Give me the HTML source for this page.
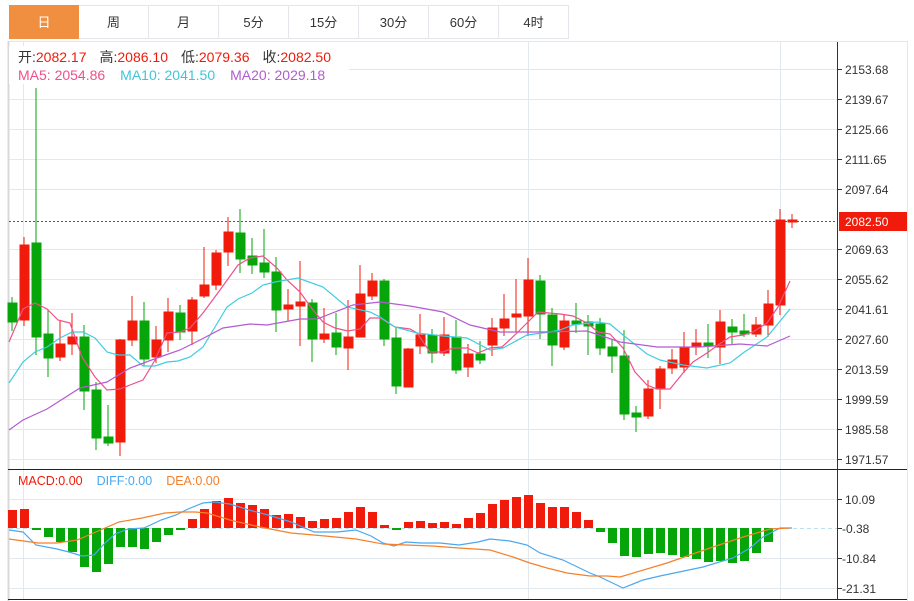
<!DOCTYPE html>
<html><head><meta charset="utf-8"><style>
body{margin:0;background:#fff;width:914px;height:601px;overflow:hidden;font-family:"Liberation Sans","Noto Sans CJK SC",sans-serif;}
.tabs{position:absolute;left:9px;top:5px;height:34px;display:flex;}
.tab{width:70px;height:34px;border:1px solid #e3e6ea;border-left:none;box-sizing:border-box;text-align:center;line-height:34px;font-size:13px;color:#333;}
.tab:first-child{border-left:1px solid #e3e6ea}
.tab.on{background:#f18f40;color:#fff;border-color:#f18f40}
svg{position:absolute;left:0;top:0}
</style></head><body>
<div class="tabs"><div class="tab on">日</div><div class="tab">周</div><div class="tab">月</div><div class="tab">5分</div><div class="tab">15分</div><div class="tab">30分</div><div class="tab">60分</div><div class="tab">4时</div></div>
<svg width="914" height="601" viewBox="0 0 914 601" font-family="Liberation Sans, Noto Sans CJK SC, sans-serif">
<g stroke="#e3e8ee" stroke-width="1">
<line x1="8" y1="41.5" x2="907" y2="41.5"/>
<line x1="8.5" y1="41" x2="8.5" y2="601" stroke="#d8d8d8" stroke-width="2"/>
<line x1="907.5" y1="41" x2="907.5" y2="601"/>
<line x1="23.5" y1="42" x2="23.5" y2="600"/>
<line x1="528.5" y1="42" x2="528.5" y2="600"/>
<line x1="780.5" y1="42" x2="780.5" y2="600"/>
<line x1="9" y1="69.5" x2="837" y2="69.5"/><line x1="9" y1="99.5" x2="837" y2="99.5"/><line x1="9" y1="129.5" x2="837" y2="129.5"/><line x1="9" y1="159.5" x2="837" y2="159.5"/><line x1="9" y1="189.5" x2="837" y2="189.5"/><line x1="9" y1="249.5" x2="837" y2="249.5"/><line x1="9" y1="279.5" x2="837" y2="279.5"/><line x1="9" y1="309.5" x2="837" y2="309.5"/><line x1="9" y1="339.5" x2="837" y2="339.5"/><line x1="9" y1="369.5" x2="837" y2="369.5"/><line x1="9" y1="399.5" x2="837" y2="399.5"/><line x1="9" y1="429.5" x2="837" y2="429.5"/><line x1="9" y1="459.5" x2="837" y2="459.5"/>
<line x1="9" y1="499.5" x2="837" y2="499.5"/><line x1="9" y1="558.5" x2="837" y2="558.5"/><line x1="9" y1="588.5" x2="837" y2="588.5"/>
</g>
<rect x="9" y="46" width="340" height="38" fill="#fff"/>
<line x1="9" y1="528.5" x2="837" y2="528.5" stroke="#bde0f0" stroke-dasharray="4,3"/>
<line x1="9" y1="221.5" x2="837" y2="221.5" stroke="#f01b0a" stroke-dasharray="2,2"/>
<g id="c">
<g stroke="#06a50a" fill="#06a50a">
<line x1="12" y1="297" x2="12" y2="331"/><rect x="8" y="303" width="9" height="19"/>
<line x1="36" y1="88" x2="36" y2="355"/><rect x="32" y="243" width="9" height="94"/>
<line x1="48" y1="310" x2="48" y2="377"/><rect x="44" y="334" width="9" height="24"/>
<line x1="84" y1="325" x2="84" y2="410"/><rect x="80" y="337" width="9" height="54"/>
<line x1="96" y1="382" x2="96" y2="450"/><rect x="92" y="390" width="9" height="48"/>
<line x1="108" y1="405" x2="108" y2="446"/><rect x="104" y="437" width="9" height="6"/>
<line x1="144" y1="302" x2="144" y2="366"/><rect x="140" y="321" width="9" height="38"/>
<line x1="180" y1="305" x2="180" y2="340"/><rect x="176" y="313" width="9" height="19"/>
<line x1="240" y1="209" x2="240" y2="273"/><rect x="236" y="233" width="9" height="26"/>
<line x1="252" y1="238" x2="252" y2="274"/><rect x="248" y="256" width="9" height="9"/>
<line x1="264" y1="229" x2="264" y2="278"/><rect x="260" y="263" width="9" height="9"/>
<line x1="276" y1="257" x2="276" y2="332"/><rect x="272" y="272" width="9" height="38"/>
<line x1="312" y1="299" x2="312" y2="362"/><rect x="308" y="303" width="9" height="36"/>
<line x1="336" y1="313" x2="336" y2="355"/><rect x="332" y="333" width="9" height="14"/>
<line x1="384" y1="279" x2="384" y2="346"/><rect x="380" y="281" width="9" height="58"/>
<line x1="396" y1="327" x2="396" y2="394"/><rect x="392" y="338" width="9" height="48"/>
<line x1="432" y1="329" x2="432" y2="363"/><rect x="428" y="335" width="9" height="18"/>
<line x1="456" y1="320" x2="456" y2="374"/><rect x="452" y="337" width="9" height="33"/>
<line x1="480" y1="341" x2="480" y2="364"/><rect x="476" y="354" width="9" height="6"/>
<line x1="540" y1="275" x2="540" y2="339"/><rect x="536" y="281" width="9" height="33"/>
<line x1="552" y1="308" x2="552" y2="366"/><rect x="548" y="315" width="9" height="30"/>
<line x1="576" y1="303" x2="576" y2="333"/><rect x="572" y="321" width="9" height="3"/>
<line x1="588" y1="315" x2="588" y2="355"/><rect x="584" y="322" width="9" height="4"/>
<line x1="600" y1="318" x2="600" y2="355"/><rect x="596" y="324" width="9" height="24"/>
<line x1="612" y1="340" x2="612" y2="373"/><rect x="608" y="347" width="9" height="9"/>
<line x1="624" y1="330" x2="624" y2="420"/><rect x="620" y="356" width="9" height="58"/>
<line x1="636" y1="406" x2="636" y2="432"/><rect x="632" y="413" width="9" height="4"/>
<line x1="708" y1="324" x2="708" y2="358"/><rect x="704" y="343" width="9" height="3"/>
<line x1="732" y1="319" x2="732" y2="344"/><rect x="728" y="327" width="9" height="5"/>
<line x1="744" y1="314" x2="744" y2="337"/><rect x="740" y="331" width="9" height="3"/>
</g>
<g stroke="#f01b0a" fill="#f01b0a">
<line x1="24" y1="237" x2="24" y2="326"/><rect x="20" y="245" width="9" height="75"/>
<line x1="60" y1="321" x2="60" y2="361"/><rect x="56" y="344" width="9" height="13"/>
<line x1="72" y1="313" x2="72" y2="355"/><rect x="68" y="337" width="9" height="7"/>
<line x1="120" y1="339" x2="120" y2="456"/><rect x="116" y="340" width="9" height="102"/>
<line x1="132" y1="296" x2="132" y2="346"/><rect x="128" y="321" width="9" height="19"/>
<line x1="156" y1="326" x2="156" y2="363"/><rect x="152" y="340" width="9" height="17"/>
<line x1="168" y1="298" x2="168" y2="352"/><rect x="164" y="312" width="9" height="28"/>
<line x1="192" y1="297" x2="192" y2="345"/><rect x="188" y="300" width="9" height="31"/>
<line x1="204" y1="247" x2="204" y2="298"/><rect x="200" y="285" width="9" height="11"/>
<line x1="216" y1="250" x2="216" y2="290"/><rect x="212" y="253" width="9" height="32"/>
<line x1="228" y1="217" x2="228" y2="266"/><rect x="224" y="232" width="9" height="20"/>
<line x1="288" y1="289" x2="288" y2="321"/><rect x="284" y="305" width="9" height="4"/>
<line x1="300" y1="261" x2="300" y2="346"/><rect x="296" y="302" width="9" height="4"/>
<line x1="324" y1="308" x2="324" y2="343"/><rect x="320" y="334" width="9" height="5"/>
<line x1="348" y1="300" x2="348" y2="370"/><rect x="344" y="337" width="9" height="11"/>
<line x1="360" y1="265" x2="360" y2="337"/><rect x="356" y="294" width="9" height="43"/>
<line x1="372" y1="273" x2="372" y2="300"/><rect x="368" y="281" width="9" height="15"/>
<line x1="408" y1="348" x2="408" y2="387"/><rect x="404" y="349" width="9" height="38"/>
<line x1="420" y1="314" x2="420" y2="354"/><rect x="416" y="335" width="9" height="11"/>
<line x1="444" y1="317" x2="444" y2="356"/><rect x="440" y="335" width="9" height="18"/>
<line x1="468" y1="344" x2="468" y2="377"/><rect x="464" y="354" width="9" height="13"/>
<line x1="492" y1="318" x2="492" y2="356"/><rect x="488" y="328" width="9" height="17"/>
<line x1="504" y1="294" x2="504" y2="336"/><rect x="500" y="319" width="9" height="9"/>
<line x1="516" y1="279" x2="516" y2="332"/><rect x="512" y="314" width="9" height="3"/>
<line x1="528" y1="258" x2="528" y2="336"/><rect x="524" y="280" width="9" height="36"/>
<line x1="564" y1="315" x2="564" y2="350"/><rect x="560" y="321" width="9" height="26"/>
<line x1="648" y1="380" x2="648" y2="419"/><rect x="644" y="389" width="9" height="27"/>
<line x1="660" y1="366" x2="660" y2="409"/><rect x="656" y="369" width="9" height="20"/>
<line x1="672" y1="349" x2="672" y2="374"/><rect x="668" y="360" width="9" height="8"/>
<line x1="684" y1="332" x2="684" y2="373"/><rect x="680" y="347" width="9" height="20"/>
<line x1="696" y1="329" x2="696" y2="355"/><rect x="692" y="343" width="9" height="4"/>
<line x1="720" y1="310" x2="720" y2="364"/><rect x="716" y="322" width="9" height="25"/>
<line x1="756" y1="317" x2="756" y2="337"/><rect x="752" y="325" width="9" height="9"/>
<line x1="768" y1="290" x2="768" y2="337"/><rect x="764" y="304" width="9" height="21"/>
<line x1="780" y1="209" x2="780" y2="315"/><rect x="776" y="220" width="9" height="85"/>
<line x1="792" y1="214" x2="792" y2="228"/><rect x="788" y="220" width="9" height="2"/>
</g>
</g>
<g fill="none" stroke-width="1.2">
<polyline stroke="#f0508a" points="9,342 23,309 35,303 47,309 58,320 70,323 82,357 95,377 107,390 120,389 130,385 143,380 155,360 167,333 180,332 190,328 203,313 220,290 238,265 250,258 263,256 277,268 287,280 300,292 313,310 323,322 335,328 348,331 360,329 370,318 380,318 395,327 410,329 417,333 430,352 443,352 453,348 467,348 478,353 490,348 502,347 517,333 538,312 560,314 573,316 587,323 598,332 610,334 623,348 635,372 647,385 657,389 670,389 683,373 693,362 707,353 718,345 730,337 743,335 753,332 767,323 778,307 790,281"/>
<polyline stroke="#3fcde0" points="9,383 23,362 35,352 47,347 60,338 72,332 83,332 95,338 107,352 118,355 130,355 143,366 155,366 167,362 178,361 190,357 203,347 215,327 227,307 238,299 252,293 263,285 275,282 298,278 323,287 347,307 370,312 380,317 395,327 417,333 443,336 467,338 490,350 503,348 527,335 550,332 560,330 573,325 597,322 610,324 623,335 647,354 660,360 683,365 707,368 730,363 743,353 767,337 790,309"/>
<polyline stroke="#b35bd0" points="9,430 23,420 47,409 80,388 107,382 130,368 157,358 180,350 200,340 223,328 250,324 267,325 300,319 317,319 353,305 380,302 410,306 443,312 470,325 500,332 540,332 587,331 620,342 657,347 700,347 740,344 767,346 790,336"/>
</g>
<g font-size="14">
<text x="18" y="62" fill="#333">开:<tspan fill="#f01b0a">2082.17</tspan><tspan dx="13">高:</tspan><tspan fill="#f01b0a">2086.10</tspan><tspan dx="13">低:</tspan><tspan fill="#f01b0a">2079.36</tspan><tspan dx="13">收:</tspan><tspan fill="#f01b0a">2082.50</tspan></text>
<text x="18" y="80" fill="#f0508a">MA5: 2054.86<tspan dx="15" fill="#3fc5db">MA10: 2041.50</tspan><tspan dx="15" fill="#b35bd0">MA20: 2029.18</tspan></text>
<text x="18" y="485" font-size="12.5" fill="#f01b0a">MACD:0.00<tspan dx="14" fill="#4aa8f0">DIFF:0.00</tspan><tspan dx="14" fill="#f5802a">DEA:0.00</tspan></text>
</g>
<g id="m">
<g fill="#f01b0a">
<rect x="8" y="510" width="9" height="18"/><rect x="20" y="509" width="9" height="19"/>
<rect x="188" y="519" width="9" height="9"/><rect x="200" y="509" width="9" height="19"/><rect x="212" y="501" width="9" height="27"/><rect x="224" y="498" width="9" height="30"/><rect x="236" y="503" width="9" height="25"/><rect x="248" y="505" width="9" height="23"/><rect x="260" y="509" width="9" height="19"/><rect x="272" y="515" width="9" height="13"/><rect x="284" y="514" width="9" height="14"/><rect x="296" y="517" width="9" height="11"/><rect x="308" y="521" width="9" height="7"/><rect x="320" y="519" width="9" height="9"/><rect x="332" y="518" width="9" height="10"/><rect x="344" y="512" width="9" height="16"/><rect x="356" y="507" width="9" height="21"/><rect x="368" y="512" width="9" height="16"/><rect x="380" y="525" width="9" height="3"/>
<rect x="404" y="522" width="9" height="6"/><rect x="416" y="521" width="9" height="7"/><rect x="428" y="523" width="9" height="5"/><rect x="440" y="522" width="9" height="6"/><rect x="452" y="524" width="9" height="4"/><rect x="464" y="518" width="9" height="10"/><rect x="476" y="513" width="9" height="15"/><rect x="488" y="504" width="9" height="24"/><rect x="500" y="500" width="9" height="28"/><rect x="512" y="497" width="9" height="31"/><rect x="524" y="495" width="9" height="33"/><rect x="536" y="503" width="9" height="25"/><rect x="548" y="507" width="9" height="21"/><rect x="560" y="507" width="9" height="21"/><rect x="572" y="512" width="9" height="16"/><rect x="584" y="520" width="9" height="8"/>
</g>
<g fill="#06a50a">
<rect x="32" y="528" width="9" height="2"/><rect x="44" y="528" width="9" height="9"/><rect x="56" y="528" width="9" height="14"/><rect x="68" y="528" width="9" height="24"/><rect x="80" y="528" width="9" height="39"/><rect x="92" y="528" width="9" height="44"/><rect x="104" y="528" width="9" height="36"/><rect x="116" y="528" width="9" height="19"/><rect x="128" y="528" width="9" height="19"/><rect x="140" y="528" width="9" height="21"/><rect x="152" y="528" width="9" height="14"/><rect x="164" y="528" width="9" height="7"/><rect x="176" y="528" width="9" height="2"/>
<rect x="392" y="528" width="9" height="2"/>
<rect x="596" y="528" width="9" height="4"/><rect x="608" y="528" width="9" height="15"/><rect x="620" y="528" width="9" height="28"/><rect x="632" y="528" width="9" height="29"/><rect x="644" y="528" width="9" height="26"/><rect x="656" y="528" width="9" height="25"/><rect x="668" y="528" width="9" height="27"/><rect x="680" y="528" width="9" height="29"/><rect x="692" y="528" width="9" height="31"/><rect x="704" y="528" width="9" height="34"/><rect x="716" y="528" width="9" height="33"/><rect x="728" y="528" width="9" height="35"/><rect x="740" y="528" width="9" height="33"/><rect x="752" y="528" width="9" height="25"/><rect x="764" y="528" width="9" height="14"/>
</g>
<g fill="none" stroke-width="1.2">
<polyline stroke="#4aa8f0" points="9,530 23,532 36,545 57,549 69,552 82,556 94,555 105,543 115,534 128,529 144,528 161,520 176,515 188,509 203,503 214,502 230,504 249,510 268,515 291,522 314,532 337,532 356,530 371,536 383,543 394,546 406,542 421,543 440,543 459,545 478,542 490,539 510,541 527,545 540,553 563,560 590,573 600,577 623,588 643,580 660,576 703,567 733,558 750,548 763,537 780,528 792,528"/>
<polyline stroke="#f5802a" points="9,539 38,543 57,543 77,540 96,532 119,522 142,518 165,513 180,512 195,512 207,513 230,520 260,527 291,533 325,536 356,539 383,544 406,545 432,546 459,548 490,550 513,557 530,563 547,568 567,573 590,576 607,576 620,577 667,563 710,548 743,537 770,529 790,528"/>
</g>
</g>
<line x1="8" y1="469.5" x2="907" y2="469.5" stroke="#222"/>
<line x1="8" y1="599.5" x2="907" y2="599.5" stroke="#222"/>
<line x1="837.5" y1="42" x2="837.5" y2="600" stroke="#333"/>
<g stroke="#333">
<line x1="837" y1="69.5" x2="842" y2="69.5"/><line x1="837" y1="99.5" x2="842" y2="99.5"/><line x1="837" y1="129.5" x2="842" y2="129.5"/><line x1="837" y1="159.5" x2="842" y2="159.5"/><line x1="837" y1="189.5" x2="842" y2="189.5"/><line x1="837" y1="249.5" x2="842" y2="249.5"/><line x1="837" y1="279.5" x2="842" y2="279.5"/><line x1="837" y1="309.5" x2="842" y2="309.5"/><line x1="837" y1="339.5" x2="842" y2="339.5"/><line x1="837" y1="369.5" x2="842" y2="369.5"/><line x1="837" y1="399.5" x2="842" y2="399.5"/><line x1="837" y1="429.5" x2="842" y2="429.5"/><line x1="837" y1="459.5" x2="842" y2="459.5"/>
<line x1="837" y1="499.5" x2="842" y2="499.5"/><line x1="837" y1="528.5" x2="842" y2="528.5"/><line x1="837" y1="558.5" x2="842" y2="558.5"/><line x1="837" y1="588.5" x2="842" y2="588.5"/>
</g>
<rect x="839" y="212" width="68" height="19" fill="#f01b0a"/>
<g font-size="12" fill="#333">
<text x="845" y="74">2153.68</text><text x="845" y="104">2139.67</text><text x="845" y="134">2125.66</text><text x="845" y="164">2111.65</text><text x="845" y="194">2097.64</text>
<text x="845" y="226" fill="#fff">2082.50</text>
<text x="845" y="254">2069.63</text><text x="845" y="284">2055.62</text><text x="845" y="314">2041.61</text><text x="845" y="344">2027.60</text><text x="845" y="374">2013.59</text><text x="845" y="404">1999.59</text><text x="845" y="434">1985.58</text><text x="845" y="464">1971.57</text>
<text x="845" y="504">10.09</text><text x="842" y="533">-0.38</text><text x="842" y="563">-10.84</text><text x="842" y="593">-21.31</text>
</g>
</svg>
</body></html>
